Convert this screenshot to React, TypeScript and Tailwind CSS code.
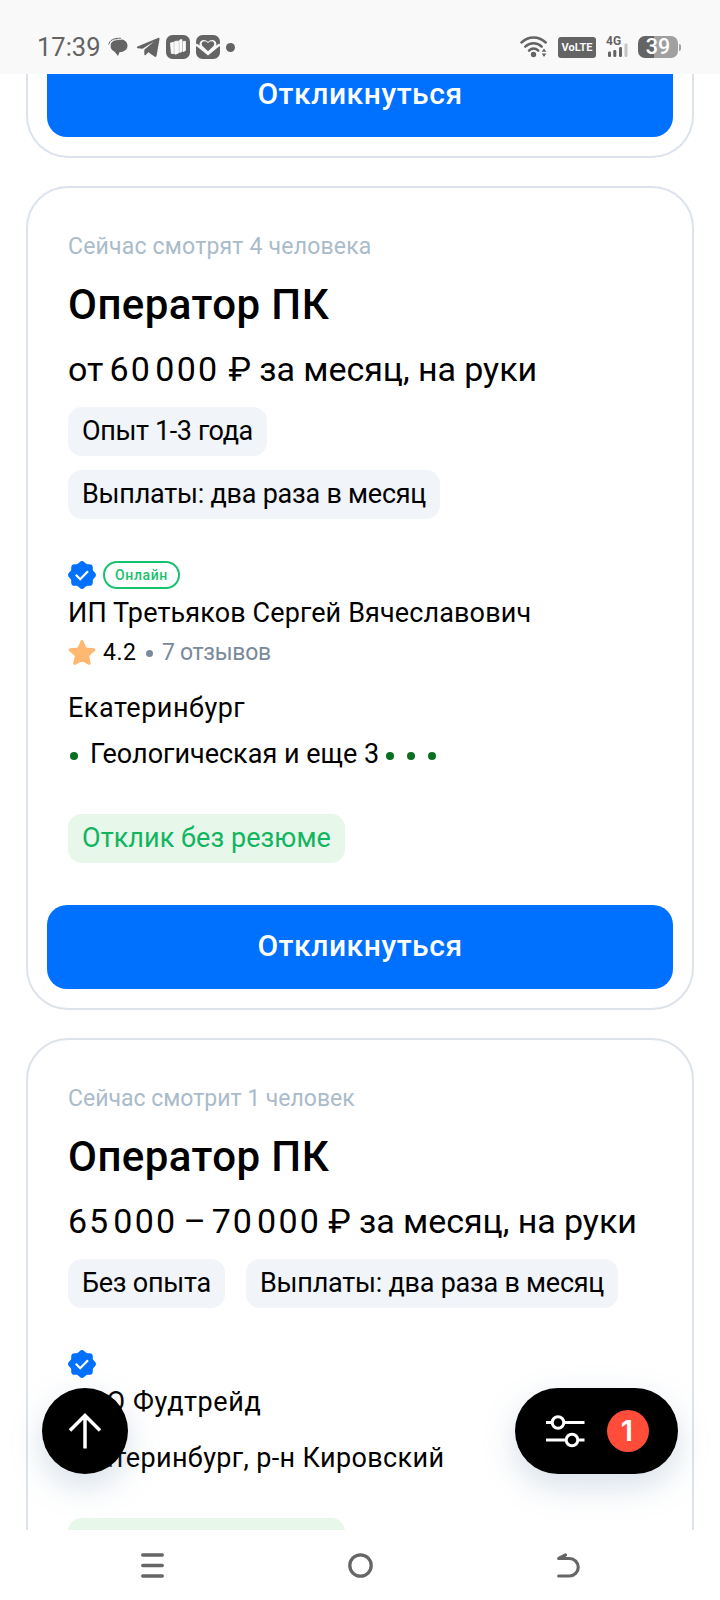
import React from 'react';

interface ChipProps {
  children?: React.ReactNode;
  className?: string;
}

interface VacancyCardProps {
  watching: React.ReactNode;
  salary: React.ReactNode;
  chips: React.ReactNode;
  children: React.ReactNode;
}

const Chip: React.FC<ChipProps> = ({ children, className = '' }) => (
  <span className={`flex h-[49px] items-center whitespace-nowrap rounded-[14px] px-[14px] text-[27px] ${className}`}>
    {children}
  </span>
);

const VerifiedBadge = () => (
  <svg viewBox="0 0 28 28" className="h-7 w-7 shrink-0">
    <path
      d="M11.6 1.2a3.4 3.4 0 0 1 4.8 0l1.5 1.4c.4.4.9.6 1.4.6h2.1a3.4 3.4 0 0 1 3.4 3.4v2.1c0 .5.2 1 .6 1.4l1.4 1.5a3.4 3.4 0 0 1 0 4.8l-1.4 1.5c-.4.4-.6.9-.6 1.4v2.1a3.4 3.4 0 0 1-3.4 3.4h-2.1c-.5 0-1 .2-1.4.6l-1.5 1.4a3.4 3.4 0 0 1-4.8 0l-1.5-1.4c-.4-.4-.9-.6-1.4-.6H6.6a3.4 3.4 0 0 1-3.4-3.4v-2.1c0-.5-.2-1-.6-1.4L1.2 16.4a3.4 3.4 0 0 1 0-4.8l1.4-1.5c.4-.4.6-.9.6-1.4V6.6a3.4 3.4 0 0 1 3.4-3.4h2.1c.5 0 1-.2 1.400-.6z"
      fill="#0070ff"
    />
    <path d="M7.800 13.800l4.400 4.400L20 10.200" fill="none" stroke="#fff" strokeWidth="2.300" />
  </svg>
);

const MetroDot = () => <span className="h-2 w-2 shrink-0 rounded-full bg-[#0a6f20]" />;

const RespondButton = ({ className = 'h-[84px] rounded-[20px] pb-[3px]' }) => (
  <button className={`flex w-full items-center justify-center bg-[#0070ff] text-[30px] font-medium tracking-[0.55px] text-white ${className}`}>
    Откликнуться
  </button>
);

const VacancyCard: React.FC<VacancyCardProps> = ({ watching, salary, chips, children }) => (
  <article className="flex h-[824px] shrink-0 flex-col rounded-[42px] border-2 border-[#dce3eb] px-[19px] pt-[43px]">
    <div className="flex flex-col px-[21px]">
      <p className="h-8 text-[23px] leading-8 text-[#aabbca]">{watching}</p>
      <h2 className="mt-5 h-11 text-[42px] font-medium leading-[44px] tracking-[0.45px]">Оператор ПК</h2>
      <p className="mt-[22px] flex h-10 items-center whitespace-nowrap text-[34px] leading-10">{salary}</p>
      <div className="mt-[18px] flex flex-wrap gap-x-[21px] gap-y-[14px]">{chips}</div>
      {children}
    </div>
  </article>
);

const StatusBar = () => (
  <header className="flex h-[74px] shrink-0 items-start justify-between bg-[#f9f9f9] pl-[37px] pr-[39px] pt-[34px] text-[#646464]">
    <div className="flex h-[26px] items-center">
      <span className="w-[64px] text-[25.5px] leading-[26px]">17:39</span>
      {/* messages */}
      <svg viewBox="0 0 20 20" className="ml-[7px] h-5 w-5" fill="currentColor">
        <path d="M10.5 2C15.8 2 19.5 4.5 19.5 8.600s-3.400 6.600-8 6.700L10 19 6.600 14.700C3.800 13.500 2.600 11.500 2.600 8.800 2.600 4.700 5.800 2 10.500 2z" />
        <path d="M.8 7.600C1.500 3.300 5.500.9 13 1.300" fill="none" stroke="currentColor" strokeWidth="1" />
        <path d="M1.800 8.300C2.600 4.200 6.500 2.100 13.500 2.400" fill="none" stroke="#f9f9f9" strokeWidth=".9" />
      </svg>
      <svg viewBox="0 0 24 22" className="ml-[8px] h-[22px] w-6" fill="currentColor">
        <path d="M1.500 10.500 22 2c1-.4 1.700.1 1.500 1.200L20.600 19.600c-.2 1.400-1.100 1.700-2.200 1L12.500 16.300 9.600 19c-.7.500-1.300.2-1.300-.7V13.700L18 5.600 6.600 12.700 1.600 12.200C.6 11.900.6 10.900 1.500 10.500z" />
      </svg>
      <svg viewBox="0 0 24 24" className="ml-[6px] h-6 w-6">
        <rect width="24" height="24" rx="6.5" fill="currentColor" />
        <path d="M4.500 8 7.500 7.200V18.800L5.300 18.300zM8.600 6.500 12.500 6V18L9.500 19.300 8.600 18.800zM13.600 5 16 4.500V16.500L13.600 17.500zM17 6.500 19.500 6.300V15.500L17 16.700z" fill="#f9f9f9" stroke="#f9f9f9" strokeWidth=".8" strokeLinejoin="round" />
      </svg>
      <svg viewBox="0 0 24 24" className="ml-[6px] h-6 w-6">
        <rect width="24" height="24" rx="6.5" fill="currentColor" />
        <path d="M0 9.500 3 11.500 12 19 21 11.500 24 9.500" fill="none" stroke="#f9f9f9" strokeWidth="2.400" />
        <path d="M4.200 12C2.500 8 4.500 4.900 7.700 4.900c1.800 0 3.300.8 4.300 2.100 1-1.300 2.500-2.100 4.300-2.100 3.200 0 5.200 3.100 3.500 7.100L12 18.500z" fill="#f9f9f9" />
        <path d="M12 16.200 7 11.600C4.600 9.200 6 6.300 8.400 6.300c1.600 0 2.800.8 3.600 2 .8-1.200 2-2 3.600-2 2.400 0 3.800 2.900 1.400 5.300z" fill="currentColor" />
      </svg>
      <span className="ml-[6px] h-[9px] w-[9px] rounded-full bg-current" />
    </div>
    <div className="flex h-[26px] items-center">
      <svg viewBox="0 0 28 24" className="h-6 w-7" fill="none" stroke="currentColor" strokeWidth="2.5" strokeLinecap="round">
        <path d="M1.500 7.500C8.500.7 18.500.7 25.700 7.500" />
        <path d="M5.300 11.700C10 7.200 17 7.200 21.700 11.700" />
        <path d="M9 15.700C11.700 12.900 15.500 12.900 18.300 15.700" />
        <circle cx="13.5" cy="19.5" r="2.7" fill="currentColor" stroke="none" />
        <path d="M21.700 16.800 24 13.500 26.300 16.800zM21.700 18.600 24 22 26.300 18.600z" fill="currentColor" stroke="none" />
      </svg>
      <span className="ml-[10px] flex h-[21px] w-[38px] items-center justify-center rounded-[3px] bg-[#646464] text-[11px] font-bold leading-none text-[#f9f9f9]">
        VoLTE
      </span>
      <span className="relative ml-[10px] flex h-6 w-6 items-start text-[12px] font-bold leading-[13px]">
        4G
        <svg viewBox="0 0 24 24" className="absolute inset-0 h-6 w-6" fill="currentColor">
          <rect x="2" y="16.5" width="3" height="5.5" rx="1.2" />
          <rect x="7.3" y="15" width="3" height="7" rx="1.2" />
          <rect x="13" y="12" width="3" height="10" rx="1.2" />
          <rect x="18.5" y="8.5" width="3" height="13.5" rx="1.2" fill="#c4c4c4" />
        </svg>
      </span>
      <span className="ml-[8px] flex h-[22px] w-10 items-center justify-center rounded-[7px] bg-linear-to-r from-[#646464] from-40% to-[#a0a0a0] to-40% text-[21.5px] font-medium leading-none text-white">
        39
      </span>
      <span className="ml-[1px] h-[7px] w-[2px] rounded-r-full bg-[#a0a0a0]" />
    </div>
  </header>
);

const NavBar = () => (
  <nav className="flex h-[70px] shrink-0 justify-between bg-white pl-[140px] pr-[138px] pt-[22px] text-[#666]">
    <svg viewBox="0 0 26 28" className="h-7 w-[26px]" stroke="currentColor" strokeWidth="3.3" strokeLinecap="round">
      <path d="M2.700 3H22.300M2.700 13.500H22.300M2.700 24H22.300" />
    </svg>
    <svg viewBox="0 0 28 28" className="h-7 w-7" fill="none" stroke="currentColor" strokeWidth="3.3">
      <circle cx="13.5" cy="13.5" r="10.7" />
    </svg>
    <svg viewBox="0 0 26 28" className="h-7 w-[26px]" fill="none" stroke="currentColor" strokeWidth="3.2" strokeLinecap="round" strokeLinejoin="round">
      <path d="M9.500 3 2.700 6.500H13.500a8.750 8.750 0 0 1 0 17.500H2.700" />
    </svg>
  </nav>
);

export default function App() {
  return (
    <div className="flex h-[1600px] w-[720px] flex-col overflow-hidden bg-white font-['Roboto',sans-serif] text-black">
      <StatusBar />

      <main className="relative flex flex-1 flex-col gap-7 overflow-hidden px-[26px]">
        {/* Tail of the previous vacancy */}
        <article className="h-[84px] shrink-0 rounded-b-[42px] border-2 border-t-0 border-[#dce3eb] px-[19px]">
          <RespondButton className="h-[63px] rounded-b-[20px] pb-6" />
        </article>

        <VacancyCard
          watching={<span className="tracking-[0.2px]">Сейчас смотрят 4 человека</span>}
          salary={
            <>
              <span>от</span>
              <span className="ml-[6px] tracking-[2.3px]">60</span>
              <span className="ml-[3px] tracking-[2.3px]">000</span>
              <span className="ml-[9px] tracking-[-0.06px]">₽ за месяц, на руки</span>
            </>
          }
          chips={
            <>
              <Chip className="bg-[#f1f4f9] tracking-[-0.38px]">Опыт 1-3 года</Chip>
              <Chip className="bg-[#f1f4f9] tracking-[-0.24px]">Выплаты: два раза в месяц</Chip>
            </>
          }
        >
          <div className="mt-[42px] flex items-center gap-[7px]">
            <VerifiedBadge />
            <span className="flex h-7 w-[77px] items-center justify-center rounded-full border-2 border-[#16c26b] text-[14px] font-medium tracking-[0.6px] text-[#16c26b]">
              Онлайн
            </span>
          </div>
          <p className="mt-2 h-8 text-[27px] leading-8 tracking-[0.12px]">ИП Третьяков Сергей Вячеславович</p>
          <div className="mt-[10px] flex h-7 items-center text-[23px] leading-7">
            <svg viewBox="0 0 28 28" className="h-7 w-7 pb-[1px]" fill="#ffb871" stroke="#ffb871" strokeWidth="3" strokeLinejoin="round">
              <path d="M14 2.500 17.400 10.200 26.300 11.200 19.800 17 21.600 25.300 14 21.300 6.400 25.300 8.200 17 1.700 11.200 10.600 10.200z" />
            </svg>
            <span className="ml-[7px] w-[35px] tracking-[0.5px]">4.2</span>
            <span className="ml-2 h-[7px] w-[7px] rounded-full bg-[#7a8c9c]" />
            <span className="ml-[9px] tracking-[-0.3px] text-[#7a8a99]">7 отзывов</span>
          </div>
          <p className="mt-[25px] h-8 text-[27px] leading-8 tracking-[0.5px]">Екатеринбург</p>
          <div className="mt-[14px] flex h-8 items-center pl-[2px] text-[27px] leading-8">
            <span className="mt-1 flex">
              <MetroDot />
            </span>
            <span className="ml-3">Геологическая и еще 3</span>
            <span className="ml-[7px] mt-1 flex gap-[13px]">
              <MetroDot />
              <MetroDot />
              <MetroDot />
            </span>
          </div>
          <div className="mt-[44px] flex">
            <Chip className="bg-[#e7f7ea] tracking-[0.06px] text-[#12b55f]">Отклик без резюме</Chip>
          </div>
          <div className="-mx-[21px] mt-[42px]">
            <RespondButton />
          </div>
        </VacancyCard>

        <VacancyCard
          watching={<span>Сейчас смотрит 1 человек</span>}
          salary={
            <>
              <span className="tracking-[2px]">65</span>
              <span className="ml-[3px] tracking-[2.3px]">000</span>
              <span className="ml-[6px]">–</span>
              <span className="ml-[6px] tracking-[2px]">70</span>
              <span className="ml-[3px] tracking-[2.3px]">000</span>
              <span className="ml-[7px] tracking-[-0.06px]">₽ за месяц, на руки</span>
            </>
          }
          chips={
            <>
              <Chip className="bg-[#f1f4f9] tracking-[-0.24px]">Без опыта</Chip>
              <Chip className="bg-[#f1f4f9] tracking-[-0.24px]">Выплаты: два раза в месяц</Chip>
            </>
          }
        >
          <div className="mt-[42px]">
            <VerifiedBadge />
          </div>
          <p className="mt-2 h-8 text-[27px] leading-8 tracking-[0.65px]">ООО Фудтрейд</p>
          <p className="mt-6 h-8 text-[27px] leading-8 tracking-[0.36px]">Екатеринбург, р-н Кировский</p>
          <div className="mt-[44px] flex">
            <Chip className="w-[277px] bg-[#e7f7ea]" />
          </div>
        </VacancyCard>

        {/* Floating buttons */}
        <div className="absolute inset-x-[42px] bottom-[56px] flex justify-between">
          <button aria-label="Наверх" className="flex h-[86px] w-[86px] items-center justify-center rounded-full bg-black shadow-[0_12px_32px_rgba(112,144,176,0.28)]">
            <svg viewBox="0 0 34 36" className="h-9 w-[34px]" fill="none" stroke="#fff" strokeWidth="3.5">
              <path d="M17 35.500V2.500M2 17.500 17 2.500 32 17.500" />
            </svg>
          </button>
          <button aria-label="Фильтры" className="flex h-[86px] w-[163px] items-center rounded-full bg-black pl-[30px] shadow-[0_12px_32px_rgba(112,144,176,0.28)]">
            <svg viewBox="0 0 40 34" className="h-[34px] w-10" fill="none" stroke="#fff" strokeWidth="3">
              <path d="M1 8.500H7M19 8.500H39.500M1 26H20.500M33 26H39.500" />
              <circle cx="13" cy="8.500" r="5.800" />
              <circle cx="27" cy="26" r="5.800" />
            </svg>
            <span className="ml-[22px] flex h-[42px] w-[42px] items-center justify-center rounded-full bg-[#ff4d3a] pb-[1px] pr-[2px] font-['Inter'] text-[29px] font-semibold leading-none text-white">
              1
            </span>
          </button>
        </div>
      </main>

      <NavBar />
    </div>
  );
}
